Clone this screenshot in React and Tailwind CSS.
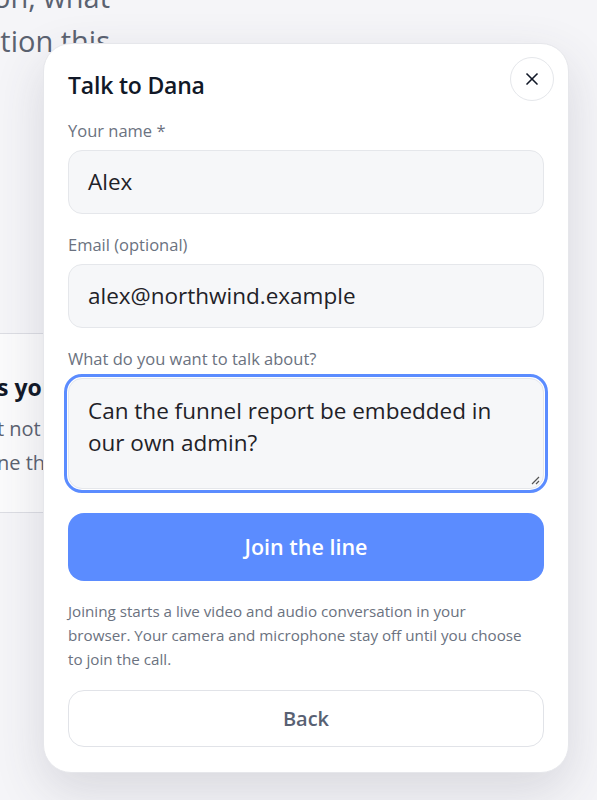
import { X } from "lucide-react";

function Field({ label, children }) {
  return (
    <div className="flex flex-col">
      <label className="text-[16.5px] leading-[20px] text-[#6b7280] mb-[9px]">{label}</label>
      {children}
    </div>
  );
}

export default function App() {
  return (
    <div className="relative w-[597px] h-[800px] overflow-hidden bg-[#f5f5f8] font-['Open_Sans','Noto_Sans',sans-serif]">
      {/* page behind the dialog */}
      <div className="flex flex-col ml-[-50px]">
        <p className="mt-[-25px] w-[170px] text-[29px] leading-[44px] text-[#5b6270] text-right pr-[10px] whitespace-nowrap">
          on, what
          <br />
          tion this
        </p>
        <div className="mt-[270px] w-[200px] h-[180px] bg-[#fbfbfc] border-y border-[#dcdde3] pt-[38px]">
          <p className="text-[23px] leading-[30px] font-bold text-[#111827] pl-[47px]">s your</p>
          <p className="mt-[10px] text-[20px] leading-[34px] text-[#5b6270] pl-[47px]">
            t not
            <br />
            ne th
          </p>
        </div>
      </div>

      {/* dialog */}
      <div className="absolute left-[43px] top-[43px] w-[526px] h-[730px] bg-white rounded-[28px] border border-[#e6e7eb] shadow-[0_18px_50px_rgba(60,64,90,0.16)] px-[24px] pt-[25px] flex flex-col">
        <div className="flex items-start justify-between">
          <h2 className="mt-[1px] text-[23px] leading-[30px] font-semibold text-[#111827] tracking-[-0.2px]">Talk to Dana</h2>
          <button className="mr-[-10px] mt-[-12px] w-[44px] h-[44px] rounded-full border border-[#e5e7eb] flex items-center justify-center text-[#111827]">
            <X size={20} strokeWidth={2} />
          </button>
        </div>

        <div className="mt-[20px] flex flex-col gap-[21px]">
          <Field label="Your name *">
            <div className="h-[64px] rounded-[14px] bg-[#f6f7f9] border border-[#e5e7eb] px-[19px] flex items-center text-[22.5px] text-[#1f2228]">
              Alex
            </div>
          </Field>
          <Field label="Email (optional)">
            <div className="h-[64px] rounded-[14px] bg-[#f6f7f9] border border-[#e5e7eb] px-[19px] flex items-center text-[22.5px] text-[#1f2228]">
              alex@northwind.example
            </div>
          </Field>
          <Field label="What do you want to talk about?">
            <div className="relative h-[111px] rounded-[14px] bg-[#f6f7f9] border border-[#e5e7eb] outline-[3px] outline-solid outline-[#5b8cff] outline-offset-[1px] pl-[19px] pr-[24px] pt-[16px] text-[22.5px] leading-[32px] text-[#1f2228]">
              Can the funnel report be embedded in our own admin?
              <svg className="absolute right-[3px] bottom-[3px]" width="10" height="10" viewBox="0 0 10 10">
                <path d="M9 2 L2 9 M9 6 L6 9" stroke="#555" strokeWidth="1.2" />
              </svg>
            </div>
          </Field>
        </div>

        <button className="mt-[24px] h-[68px] rounded-[16px] bg-[#5b8cff] text-white text-[21.5px] font-semibold">
          Join the line
        </button>

        <p className="mt-[18px] w-[455px] text-[15.2px] leading-[24px] text-[#6b7280]">
          Joining starts a live video and audio conversation in your browser. Your camera and microphone stay off until you choose to join the call.
        </p>

        <button className="mt-[19px] h-[57px] rounded-[16px] border border-[#e1e3e8] bg-white text-[20px] font-semibold text-[#586173]">
          Back
        </button>
      </div>
    </div>
  );
}
